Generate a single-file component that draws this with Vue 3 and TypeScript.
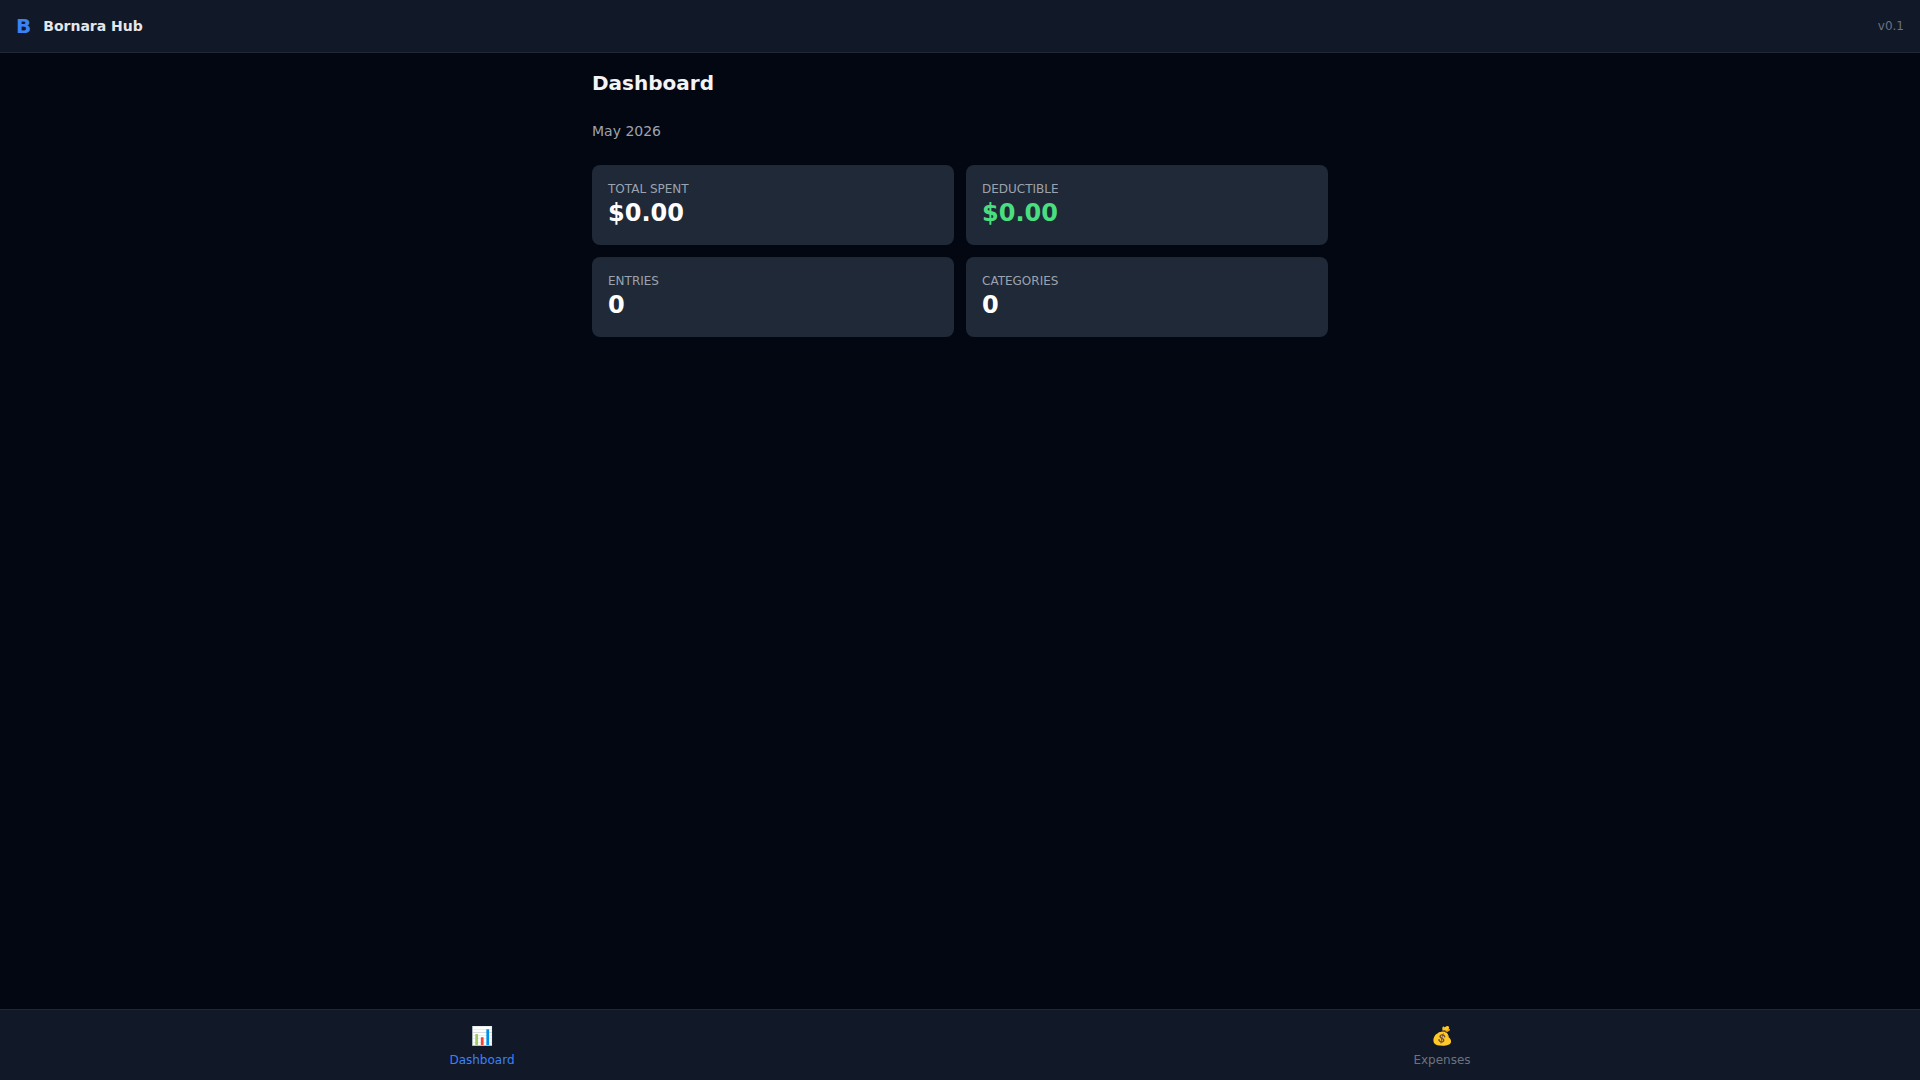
<script setup lang="ts">
interface Stat {
  label: string
  value: string
  positive?: boolean
}

const stats: Stat[] = [
  { label: 'Total Spent', value: '$0.00' },
  { label: 'Deductible', value: '$0.00', positive: true },
  { label: 'Entries', value: '0' },
  { label: 'Categories', value: '0' },
]

const tabs = [
  { icon: '📊', label: 'Dashboard', href: '#dashboard', active: true },
  { icon: '💰', label: 'Expenses', href: '#expenses', active: false },
]
</script>

<template>
  <div class="shell">
    <header class="topbar">
      <div class="brand">
        <span class="logo">B</span>
        <span class="name">Bornara Hub</span>
      </div>
      <span class="version">v0.1</span>
    </header>
    <main class="content">
      <h1>Dashboard</h1>
      <p class="period">May 2026</p>
      <section class="stats">
        <article v-for="s in stats" :key="s.label" class="card">
          <p class="label">{{ s.label }}</p>
          <p class="value" :class="{ positive: s.positive }">{{ s.value }}</p>
        </article>
      </section>
    </main>
    <nav class="tabs">
      <a v-for="t in tabs" :key="t.label" :href="t.href" class="tab" :class="{ active: t.active }">
        <span class="icon">{{ t.icon }}</span>
        <span>{{ t.label }}</span>
      </a>
    </nav>
  </div>
</template>

<style>
body {
  background: #030712;
}
</style>

<style scoped>
.shell {
  display: flex;
  flex-direction: column;
  min-height: 100vh;
  color: #f3f4f6;
  font-family: "DejaVu Sans", sans-serif;
  font-size: 16px;
  line-height: 24px;
}
.topbar {
  display: flex;
  align-items: center;
  justify-content: space-between;
  padding: 12px 16px;
  background: #111827;
  border-bottom: 1px solid #1f2937;
}
.brand {
  display: flex;
  align-items: center;
  gap: 12px;
}
.logo {
  color: #3b82f6;
  font-size: 20px;
  line-height: 28px;
  font-weight: 700;
}
.name {
  color: #e5e7eb;
  font-size: 14px;
  line-height: 20px;
  font-weight: 600;
}
.version {
  color: #6b7280;
  font-size: 12px;
  line-height: 16px;
}
.content {
  flex: 1;
  box-sizing: border-box;
  width: 100%;
  max-width: 768px;
  margin: 0 auto;
  padding: 16px;
}
h1,
p {
  margin: 0;
}
h1 {
  margin-bottom: 24px;
  font-size: 20px;
  line-height: 28px;
  font-weight: 700;
}
.period {
  margin-bottom: 24px;
  color: #9ca3af;
  font-size: 14px;
  line-height: 20px;
}
.stats {
  display: grid;
  grid-template-columns: repeat(2, 1fr);
  gap: 12px;
}
.card {
  padding: 16px;
  background: #1f2937;
  border-radius: 8px;
}
.label {
  color: #9ca3af;
  font-size: 12px;
  line-height: 16px;
  text-transform: uppercase;
}
.value {
  color: #fff;
  font-size: 24px;
  line-height: 32px;
  font-weight: 700;
}
.value.positive {
  color: #4ade80;
}
.tabs {
  display: flex;
  justify-content: space-around;
  background: #111827;
  border-top: 1px solid #1f2937;
}
.tab {
  display: flex;
  flex-direction: column;
  align-items: center;
  padding: 12px;
  color: #6b7280;
  font-size: 12px;
  line-height: 16px;
  text-decoration: none;
}
.tab.active {
  color: #3b82f6;
}
.icon {
  margin-bottom: 2px;
  font-size: 18px;
  line-height: 28px;
}
</style>
